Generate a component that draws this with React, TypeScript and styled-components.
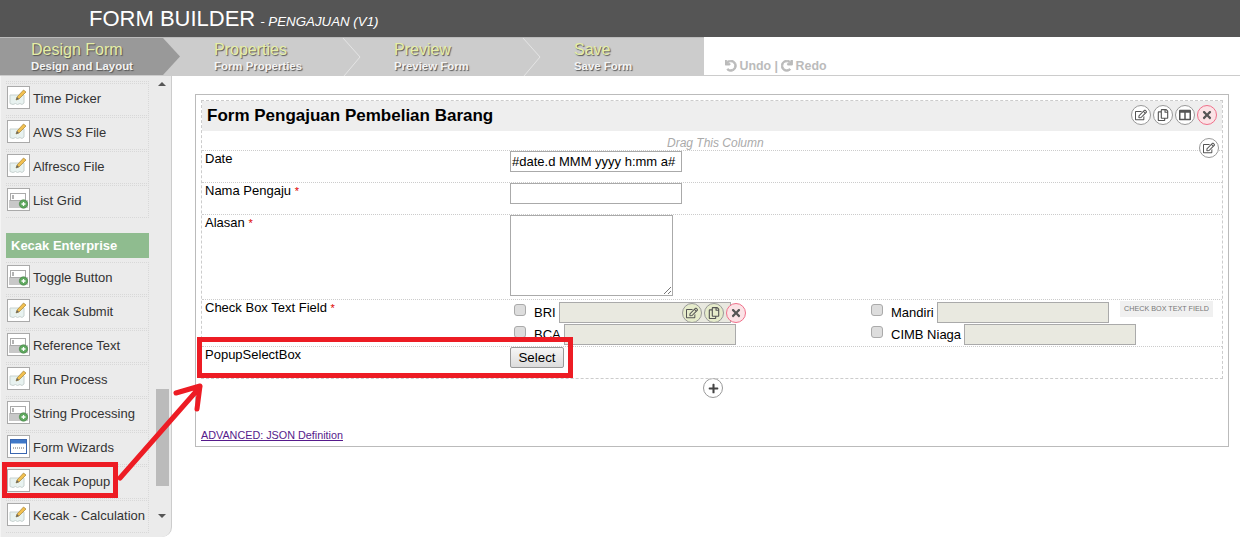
import React from 'react';
import styled, { createGlobalStyle } from 'styled-components';
import { FaColumns, FaPlus, FaRedo, FaRegCopy, FaRegEdit, FaTimes, FaUndo } from 'react-icons/fa';

const GlobalStyle = createGlobalStyle`
  html, body {
    margin: 0;
    padding: 0;
    background: #fff;
    font-family: "Liberation Sans", Arial, sans-serif;
    color: #000;
  }
  * {
    box-sizing: border-box;
  }
`;

const Page = styled.div`
  position: relative;
  width: 1240px;
  height: 537px;
  overflow: hidden;
  background: #fff;
`;

const Header = styled.header`
  height: 37px;
  padding-left: 89px;
  display: flex;
  align-items: baseline;
  gap: 5px;
  line-height: 37px;
  background: #555;
  color: #fff;
`;

const Title = styled.span`
  font-size: 22px;
`;

const SubTitle = styled.span`
  font-size: 13.3px;
  font-style: italic;
`;

const StepBar = styled.nav`
  height: 39px;
  display: flex;
  border-bottom: 1px solid #ccc;
`;

const Steps = styled.div`
  width: 704px;
  flex: none;
  display: flex;
  background: #ccc;
  border-top: 1px solid #bbb;
`;

const Step = styled.div<{ $active?: boolean }>`
  position: relative;
  width: 180px;
  flex: none;
  padding: 2px 0 0 34px;
  background: ${(p) => (p.$active ? '#999' : 'transparent')};
  text-shadow: 1px 1px 1px #555;

  &:first-child {
    padding-left: 31px;
    clip-path: polygon(0 0, 163px 0, 180px 50%, 163px 100%, 0 100%);
  }

  &:last-child {
    width: 164px;
  }
`;

const StepName = styled.div`
  font-size: 16px;
  line-height: 20px;
  color: #e6eea6;
`;

const StepHint = styled.div`
  font-size: 11.4px;
  font-weight: bold;
  line-height: 12px;
  color: #f4f4f4;
`;

const Chevron = styled.svg`
  position: absolute;
  top: 0;
  right: -2px;
  width: 20px;
  height: 38px;
`;

const History = styled.div`
  margin-left: 21px;
  align-self: flex-end;
  display: flex;
  align-items: center;
  gap: 3px;
  height: 18px;
  font-size: 12.4px;
  font-weight: bold;
  color: #bbb;

  svg {
    font-size: 11.5px;
    stroke: currentColor;
    stroke-width: 40;
  }
`;

const Body = styled.div`
  display: flex;
  height: 461px;
`;

const Sidebar = styled.aside`
  width: 172px;
  flex: none;
  display: flex;
  background: #ebebeb;
  border-left: 1px solid #f4f4f4;
  border-right: 1px solid #ccc;
  border-bottom-right-radius: 10px;
  overflow: hidden;
`;

const Palette = styled.div`
  width: 150px;
  flex: none;
  padding-left: 5px;
`;

const PaletteEdge = styled.div`
  width: 143px;
  height: 6px;
  margin-bottom: 1px;
  border-bottom: 1px dotted #d8d8d8;
`;

const PaletteItem = styled.div`
  height: 33px;
  margin-bottom: 1px;
  padding: 0 0 2px 1px;
  width: 143px;
  display: flex;
  align-items: center;
  gap: 3px;
  font-size: 13px;
  color: #333;
  border: 1px dotted #d8d8d8;
  border-width: 1px 1px 1px 0;
  white-space: nowrap;
`;

const PaletteIcon = styled.span`
  width: 23px;
  height: 23px;
  flex: none;
  margin-top: -3px;
  padding: 1px;
  background: #fff;
  border: 1px solid #aaa;

  svg {
    display: block;
    width: 19px;
    height: 19px;
  }
`;

const PaletteHeading = styled.div`
  width: 143px;
  height: 25px;
  margin: 15px 0 4px;
  padding-left: 5px;
  font-size: 13px;
  font-weight: bold;
  line-height: 25px;
  background: #8fbc8f;
  color: #fff;
`;

const Scrollbar = styled.div`
  width: 14px;
  margin-left: 4px;
  display: flex;
  flex-direction: column;
  align-items: center;
`;

const ScrollArrow = styled.span<{ $down?: boolean }>`
  width: 0;
  height: 0;
  margin-top: ${(p) => (p.$down ? '28px' : '6px')};
  border-left: 4px solid transparent;
  border-right: 4px solid transparent;
  ${(p) => (p.$down ? 'border-top: 4px solid #555;' : 'border-bottom: 4px solid #555;')}
`;

const ScrollThumb = styled.div`
  width: 13px;
  height: 97px;
  margin-top: 303px;
  background: #bbb;
`;

const Content = styled.main`
  flex: 1;
  padding: 18px 11px 0 23px;
`;

const FormBox = styled.section`
  height: 353px;
  padding: 5px;
  border: 1px solid #bbb;
`;

const Canvas = styled.div`
  position: relative;
  height: 279px;
  border: 1px dashed #ccc;
`;

const CanvasTitle = styled.div`
  height: 30px;
  padding-left: 5px;
  display: flex;
  align-items: center;
  background: #eee;
  font-size: 17px;
  font-weight: bold;
`;

const ToolGroup = styled.div`
  position: absolute;
  display: flex;
  gap: 2px;
`;

const TitleTools = styled(ToolGroup)`
  top: 4px;
  right: 5px;
`;

const ColumnTools = styled(ToolGroup)`
  top: 37px;
  right: 3px;
`;

const ElementTools = styled(ToolGroup)`
  top: 202px;
  left: 480px;
`;

const RoundButton = styled.span<{ $danger?: boolean; $tint?: boolean }>`
  width: 20px;
  height: 20px;
  border-radius: 50%;
  display: flex;
  align-items: center;
  justify-content: center;
  font-size: 12px;
  color: #555;
  background: ${(p) => (p.$danger ? '#fbe3e6' : p.$tint ? '#e6eccb' : '#fff')};
  border: 1px solid ${(p) => (p.$danger ? '#f0708a' : '#999')};
`;

const DragHint = styled.div`
  height: 19px;
  padding-left: 465px;
  font-size: 12px;
  font-style: italic;
  line-height: 24px;
  color: #aaa;
`;

const Row = styled.div<{ $height: number }>`
  height: ${(p) => p.$height}px;
  display: flex;
  border-top: 1px dotted #ccc;
`;

const FieldLabel = styled.div`
  width: 308px;
  flex: none;
  padding: 1px 0 0 3px;
  font-size: 13px;
  line-height: 14px;
`;

const Required = styled.span`
  color: #d00;
  font-size: 11px;
`;

const FieldBody = styled.div`
  flex: 1;
`;

const TextInput = styled.div`
  width: 172px;
  height: 21px;
  padding-left: 1px;
  font-size: 13px;
  line-height: 19px;
  white-space: nowrap;
  background: #fff;
  border: 1px solid #aaa;
`;

const TextArea = styled.div`
  position: relative;
  width: 163px;
  height: 81px;
  background: #fff;
  border: 1px solid #aaa;
`;

const ResizeGrip = styled.svg`
  position: absolute;
  right: 0;
  bottom: 0;
  width: 9px;
  height: 9px;
`;

const CheckGrid = styled.div`
  display: grid;
  grid-template-columns: 357px 1fr;
  row-gap: 1px;
  padding: 2px 0 0 4px;
`;

const CheckItem = styled.label`
  display: flex;
  align-items: center;
  height: 21px;
  font-size: 13px;
`;

const CheckBox = styled.span`
  width: 12px;
  height: 12px;
  flex: none;
  margin: -5px 8px 0 0;
  border-radius: 3px;
  background: #ddd;
  border: 1px solid #aaa;
`;

const CheckInput = styled.span`
  width: 172px;
  height: 21px;
  margin-left: 3px;
  background: #e9e9e0;
  border: 1px solid #aaa;
`;

const TypeTag = styled.div`
  position: absolute;
  top: 200px;
  right: 9px;
  width: 93px;
  height: 16px;
  font-size: 7.2px;
  line-height: 15px;
  text-align: center;
  color: #777;
  background: #f0f0f0;
`;

const SelectButton = styled.div`
  width: 54px;
  height: 21px;
  font-size: 13.33px;
  line-height: 19px;
  text-align: center;
  background: linear-gradient(#f6f6f6, #dcdcdc);
  border: 1px solid #999;
  border-radius: 2px;
`;

const AddRow = styled.div`
  height: 49px;
  padding-left: 502px;
  display: flex;
  align-items: flex-start;
`;

const AddButton = styled(RoundButton)`
  margin-top: -1px;
  font-size: 11px;
  color: #444;
`;

const JsonLink = styled.a`
  display: block;
  font-size: 10.8px;
  color: #551a8b;
  text-decoration: underline;
  line-height: 14px;
`;

const Highlight = styled.div`
  position: absolute;
  border: 5px solid #ed1c24;
  pointer-events: none;
`;

const PaletteHighlight = styled(Highlight)`
  left: 2px;
  top: 462px;
  width: 116px;
  height: 36px;
`;

const RowHighlight = styled(Highlight)`
  left: 197px;
  top: 337px;
  width: 376px;
  height: 41px;
`;

const Arrow = styled.svg`
  position: absolute;
  left: 110px;
  top: 375px;
  width: 100px;
  height: 110px;
  pointer-events: none;
`;

const EditIcon = () => (
  <svg viewBox="0 0 19 19">
    <path
      d="M1 7h14v8l-2 1.5-2-1-2.5 1-2-1-2.5 1-3-1z"
      fill="#e8f2f0"
      stroke="#c8d2d0"
    />
    <path d="M7 12l1-3 6.5-7 2.5 2-7 7z" fill="#f2c050" stroke="#96752a" strokeWidth="0.6" />
    <path d="M7 12l1-3 2 2z" fill="#666" />
  </svg>
);

const FieldIcon = () => (
  <svg viewBox="0 0 19 19">
    <rect x="0" y="10" width="19" height="8" fill="#c8c8c8" />
    <rect x="1.5" y="3.5" width="15" height="7" fill="#fff" stroke="#aaa" />
    <path d="M4 5v4" stroke="#666" />
    <circle cx="14.5" cy="14" r="4.2" fill="#5fa85f" stroke="#3f7f3f" strokeWidth="0.6" />
    <path d="M12.5 14h4M14.5 12v4" stroke="#fff" strokeWidth="1.3" />
  </svg>
);

const WizardIcon = () => (
  <svg viewBox="0 0 19 19">
    <rect x="1.5" y="2.5" width="16" height="14" fill="#fff" stroke="#3a66b0" />
    <rect x="2" y="3" width="15" height="3.5" fill="#3f78c8" />
    <path d="M4 11h11" stroke="#666" strokeDasharray="1 1" />
  </svg>
);

type PaletteKind = 'edit' | 'field' | 'wizard';

const icons: Record<PaletteKind, React.FC> = {
  edit: EditIcon,
  field: FieldIcon,
  wizard: WizardIcon,
};

const coreItems: [string, PaletteKind][] = [
  ['Time Picker', 'edit'],
  ['AWS S3 File', 'edit'],
  ['Alfresco File', 'edit'],
  ['List Grid', 'field'],
];

const enterpriseItems: [string, PaletteKind][] = [
  ['Toggle Button', 'field'],
  ['Kecak Submit', 'edit'],
  ['Reference Text', 'field'],
  ['Run Process', 'edit'],
  ['String Processing', 'field'],
  ['Form Wizards', 'wizard'],
  ['Kecak Popup', 'edit'],
  ['Kecak - Calculation', 'edit'],
];

const renderItem = ([name, kind]: [string, PaletteKind]) => {
  const Icon = icons[kind];
  return (
    <PaletteItem key={name}>
      <PaletteIcon>
        <Icon />
      </PaletteIcon>
      {name}
    </PaletteItem>
  );
};

const StepChevron = () => (
  <Chevron viewBox="0 0 20 38">
    <path d="M1 0l17 19L2 38" fill="none" stroke="#e4e4e4" strokeWidth="1" />
  </Chevron>
);

const steps = [
  ['Design Form', 'Design and Layout'],
  ['Properties', 'Form Properties'],
  ['Preview', 'Preview Form'],
  ['Save', 'Save Form'],
];

const checkOptions = ['BRI', 'Mandiri', 'BCA', 'CIMB Niaga'];

const App: React.FC = () => (
  <Page>
    <GlobalStyle />
    <Header>
      <Title>FORM BUILDER</Title>
      <SubTitle>- PENGAJUAN (V1)</SubTitle>
    </Header>

    <StepBar>
      <Steps>
        {steps.map(([name, hint], i) => (
          <Step key={name} $active={i === 0}>
            <StepName>{name}</StepName>
            <StepHint>{hint}</StepHint>
            {i > 0 && i < 3 && <StepChevron />}
          </Step>
        ))}
      </Steps>
      <History>
        <FaUndo /> Undo | <FaRedo /> Redo
      </History>
    </StepBar>

    <Body>
      <Sidebar>
        <Palette>
          <PaletteEdge />
          {coreItems.map(renderItem)}
          <PaletteHeading>Kecak Enterprise</PaletteHeading>
          {enterpriseItems.map(renderItem)}
        </Palette>
        <Scrollbar>
          <ScrollArrow />
          <ScrollThumb />
          <ScrollArrow $down />
        </Scrollbar>
      </Sidebar>

      <Content>
        <FormBox>
          <Canvas>
            <CanvasTitle>Form Pengajuan Pembelian Barang</CanvasTitle>
            <TitleTools>
              <RoundButton><FaRegEdit /></RoundButton>
              <RoundButton><FaRegCopy /></RoundButton>
              <RoundButton><FaColumns /></RoundButton>
              <RoundButton $danger><FaTimes /></RoundButton>
            </TitleTools>
            <ColumnTools>
              <RoundButton><FaRegEdit /></RoundButton>
            </ColumnTools>
            <DragHint>Drag This Column</DragHint>

            <Row $height={32}>
              <FieldLabel>Date</FieldLabel>
              <FieldBody>
                <TextInput>#date.d MMM yyyy h:mm a#</TextInput>
              </FieldBody>
            </Row>
            <Row $height={32}>
              <FieldLabel>Nama Pengaju <Required>*</Required></FieldLabel>
              <FieldBody>
                <TextInput />
              </FieldBody>
            </Row>
            <Row $height={85}>
              <FieldLabel>Alasan <Required>*</Required></FieldLabel>
              <FieldBody>
                <TextArea>
                  <ResizeGrip viewBox="0 0 9 9">
                    <path d="M1 8l7-7M5 8l3-3" stroke="#777" />
                  </ResizeGrip>
                </TextArea>
              </FieldBody>
            </Row>
            <Row $height={47}>
              <FieldLabel>Check Box Text Field <Required>*</Required></FieldLabel>
              <FieldBody>
                <CheckGrid>
                  {checkOptions.map((option) => (
                    <CheckItem key={option}>
                      <CheckBox />
                      {option}
                      <CheckInput />
                    </CheckItem>
                  ))}
                </CheckGrid>
              </FieldBody>
            </Row>
            <Row $height={32}>
              <FieldLabel>PopupSelectBox</FieldLabel>
              <FieldBody>
                <SelectButton>Select</SelectButton>
              </FieldBody>
            </Row>
            <TypeTag>CHECK BOX TEXT FIELD</TypeTag>
            <ElementTools>
              <RoundButton $tint><FaRegEdit /></RoundButton>
              <RoundButton $tint><FaRegCopy /></RoundButton>
              <RoundButton $danger><FaTimes /></RoundButton>
            </ElementTools>
          </Canvas>
          <AddRow>
            <AddButton><FaPlus /></AddButton>
          </AddRow>
          <JsonLink>ADVANCED: JSON Definition</JsonLink>
        </FormBox>
      </Content>
    </Body>

    <PaletteHighlight />
    <RowHighlight />
    <Arrow viewBox="0 0 100 110">
      <path
        d="M10 103L90 12M66 18L90 11L87 34"
        fill="none"
        stroke="#ed1c24"
        strokeWidth="5"
        strokeLinecap="round"
        strokeLinejoin="round"
      />
    </Arrow>
  </Page>
);

export default App;
